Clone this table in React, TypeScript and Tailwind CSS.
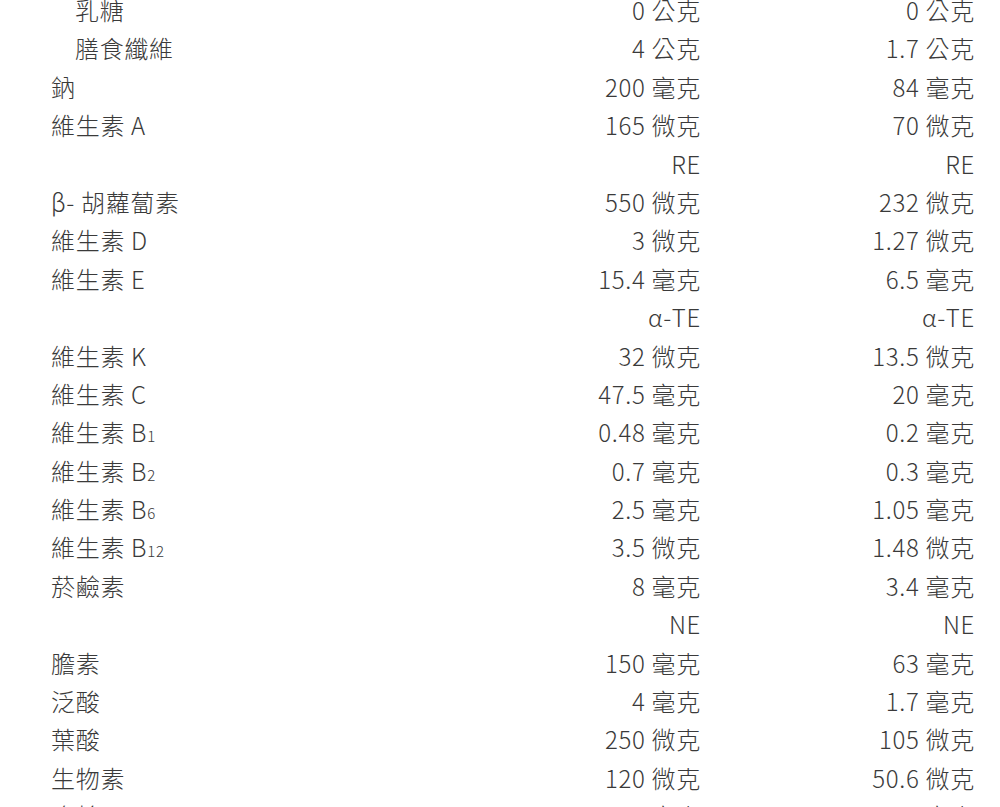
import React from "react";

type Row = {
  label?: React.ReactNode;
  indent?: boolean;
  a: string;
  b: string;
};

const B = (n: string) => (
  <>
    維生素 B<span className="text-[15px] leading-none">{n}</span>
  </>
);

const ROWS: Row[] = [
  { label: "乳糖", indent: true, a: "0 公克", b: "0 公克" },
  { label: "膳食纖維", indent: true, a: "4 公克", b: "1.7 公克" },
  { label: "鈉", a: "200 毫克", b: "84 毫克" },
  { label: "維生素 A", a: "165 微克", b: "70 微克" },
  { a: "RE", b: "RE" },
  { label: "β- 胡蘿蔔素", a: "550 微克", b: "232 微克" },
  { label: "維生素 D", a: "3 微克", b: "1.27 微克" },
  { label: "維生素 E", a: "15.4 毫克", b: "6.5 毫克" },
  { a: "α-TE", b: "α-TE" },
  { label: "維生素 K", a: "32 微克", b: "13.5 微克" },
  { label: "維生素 C", a: "47.5 毫克", b: "20 毫克" },
  { label: B("1"), a: "0.48 毫克", b: "0.2 毫克" },
  { label: B("2"), a: "0.7 毫克", b: "0.3 毫克" },
  { label: B("6"), a: "2.5 毫克", b: "1.05 毫克" },
  { label: B("12"), a: "3.5 微克", b: "1.48 微克" },
  { label: "菸鹼素", a: "8 毫克", b: "3.4 毫克" },
  { a: "NE", b: "NE" },
  { label: "膽素", a: "150 毫克", b: "63 毫克" },
  { label: "泛酸", a: "4 毫克", b: "1.7 毫克" },
  { label: "葉酸", a: "250 微克", b: "105 微克" },
  { label: "生物素", a: "120 微克", b: "50.6 微克" },
  { label: "膽鹼", a: "0 毫克", b: "0 毫克" },
];

export default function App() {
  return (
    <div
      className="h-[807px] overflow-hidden bg-white text-[#3a3a3a] font-light"
      style={{ fontFamily: '"Noto Sans CJK TC", "Noto Sans", sans-serif' }}
    >
      <div className="-mt-[9px] pl-[51px] pr-[25px] text-[24px] leading-[38.4px] tracking-[0.7px]">
        {ROWS.map((r, i) => (
          <div key={i} className="flex h-[38.4px]">
            <div className={`flex-1 ${r.indent ? "pl-[24px]" : ""}`}>{r.label ?? "\u00a0"}</div>
            <div className="w-[274px] text-right">{r.a}</div>
            <div className="w-[274px] text-right">{r.b}</div>
          </div>
        ))}
      </div>
    </div>
  );
}
